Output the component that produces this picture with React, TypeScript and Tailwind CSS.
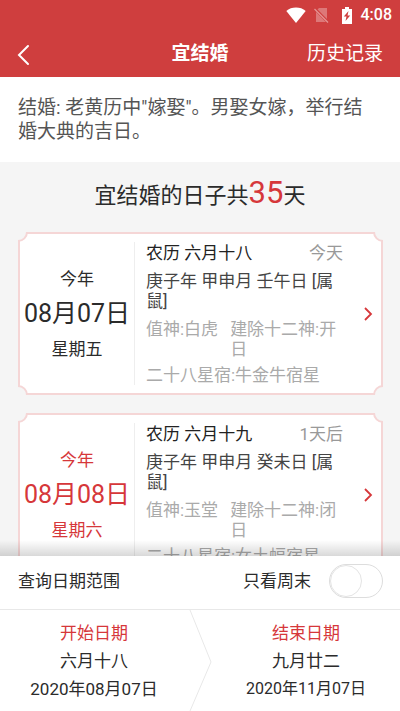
import { useState } from "react";

type Day = {
  date: string;
  week: string;
  lunar: string;
  ago: string;
  ganzhi: string;
  god: string;
  build: string;
  star: string;
  weekend: boolean;
};

const days: Day[] = [
  {
    date: "08月07日",
    week: "星期五",
    lunar: "农历 六月十八",
    ago: "今天",
    ganzhi: "庚子年 甲申月 壬午日 [属鼠]",
    god: "值神:白虎",
    build: "建除十二神:开日",
    star: "二十八星宿:牛金牛宿星",
    weekend: false,
  },
  {
    date: "08月08日",
    week: "星期六",
    lunar: "农历 六月十九",
    ago: "1天后",
    ganzhi: "庚子年 甲申月 癸未日 [属鼠]",
    god: "值神:玉堂",
    build: "建除十二神:闭日",
    star: "二十八星宿:女土蝠宿星",
    weekend: true,
  },
];

function StatusBar() {
  return (
    <div className="flex h-[30px] items-center justify-end gap-2 px-2">
      <svg width="20" height="16" viewBox="0 0 20 16" fill="#fff" aria-hidden="true">
        <path d="M10 16 0.3 4C3 1.6 6.200 0.500 10 0.500S17 1.600 19.700 4Z" />
      </svg>
      <svg width="15" height="16" viewBox="0 0 15 16" aria-hidden="true">
        <path d="M5 1h8v14H2V4Z" fill="#fff" fillOpacity="0.3" />
        <path d="M0.500 1.500 14 15" stroke="#cf3e3e" strokeWidth="3" />
        <path d="M0.500 2 14 15.500" stroke="#fff" strokeOpacity="0.45" strokeWidth="1.300" />
      </svg>
      <svg className="ml-1" width="12" height="17" viewBox="0 0 12 17" aria-hidden="true">
        <path d="M4 0h4v2h3v15H1V2h3Z" fill="#fff" />
        <path d="M7.500 4 2.800 9.500h2.700L4.500 14l4.700-5.500H6.500Z" fill="#cf3e3e" />
      </svg>
      <span className="text-base font-medium">4:08</span>
    </div>
  );
}

function DayCard({ day }: { day: Day }) {
  const notch = "absolute size-5 rounded-full border-2 border-[#f5d6d6] bg-[#f5f5f5]";
  return (
    <a
      href="#day"
      className="relative flex items-center overflow-hidden bg-white p-[10px] pl-[2px] text-[17px] leading-5"
    >
      <span className="absolute inset-0 border-2 border-[#f5d6d6]" />
      <span className={`${notch} -top-[10px] -left-[10px]`} />
      <span className={`${notch} -top-[10px] -right-[10px]`} />
      <span className={`${notch} -bottom-[10px] -left-[10px]`} />
      <span className={`${notch} -right-[10px] -bottom-[10px]`} />
      <div
        className={`flex h-[143px] w-[115px] shrink-0 flex-col items-center justify-center gap-[11px] border-r border-[#eee] ${
          day.weekend ? "text-[#d6373a]" : "text-[#2b2b2b]"
        }`}
      >
        <span>今年</span>
        <span className="text-[25px] leading-7 whitespace-nowrap">{day.date}</span>
        <span>{day.week}</span>
      </div>
      <div className="ml-[11px] flex min-w-0 flex-1 flex-col text-[#aaa]">
        <div className="flex justify-between">
          <span className="text-[#222]">{day.lunar}</span>
          <span className="text-[#999]">{day.ago}</span>
        </div>
        <p className="mt-2 text-[#444]">{day.ganzhi}</p>
        <div className="mt-2 flex gap-3">
          <span className="shrink-0">{day.god}</span>
          <span>{day.build}</span>
        </div>
        <p className="mt-[6px]">{day.star}</p>
      </div>
      <svg className="ml-5 shrink-0" width="10" height="14" viewBox="0 0 10 14" fill="none" aria-hidden="true">
        <path d="M2 1l6 6-6 6" stroke="#d6373a" strokeWidth="1.800" />
      </svg>
    </a>
  );
}

export default function App() {
  const [weekendOnly, setWeekendOnly] = useState(false);
  return (
    <div className="flex h-screen flex-col bg-[#f5f5f5] font-[Roboto,'Noto_Sans_CJK_SC',sans-serif] text-[#2b2b2b]">
      <header className="shrink-0 bg-[#cf3e3e] text-white">
        <StatusBar />
        <div className="grid h-[47px] grid-cols-3 items-center px-[17px] pt-[2px] text-[19px]">
          <button type="button" aria-label="返回" className="justify-self-start">
            <svg width="13" height="22" viewBox="0 0 13 22" fill="none">
              <path d="M11 2 2 11l9 9" stroke="#fff" strokeWidth="2" strokeLinecap="round" />
            </svg>
          </button>
          <h1 className="text-center font-bold">宜结婚</h1>
          <button type="button" className="justify-self-end whitespace-nowrap">历史记录</button>
        </div>
      </header>

      <main className="min-h-0 flex-1 overflow-y-auto [scrollbar-width:none]">
        <p className="bg-white pt-[19px] pr-7 pb-[18px] pl-[18px] text-[19px] leading-6 text-[#555]">
          结婚: 老黄历中"嫁娶"。男娶女嫁，举行结婚大典的吉日。
        </p>
        <h2 className="flex h-[70px] items-baseline justify-center pt-2 text-[22px] leading-[46px]">
          宜结婚的日子共<span className="text-[31px] text-[#d6373a]">35</span>天
        </h2>
        <div className="flex flex-col gap-[18px] pr-[17px] pl-[18px]">
          {days.map((day) => (
            <DayCard key={day.date} day={day} />
          ))}
        </div>
      </main>

      <footer className="relative shrink-0 bg-white text-[17px] leading-5">
        <div className="pointer-events-none absolute inset-x-0 bottom-full h-4 bg-linear-to-t from-black/15 to-transparent" />
        <div className="flex h-[54px] items-center border-b border-[#e8e8e8] pr-[17px] pb-1 pl-[18px]">
          <span className="flex-1">查询日期范围</span>
          <label htmlFor="weekend" className="mr-[18px]">只看周末</label>
          <span className="relative h-[34px] w-[54px]">
            <input
              id="weekend"
              type="checkbox"
              role="switch"
              checked={weekendOnly}
              onChange={(e) => setWeekendOnly(e.target.checked)}
              className="peer block h-full w-full appearance-none rounded-full border border-[#ddd] bg-white checked:bg-[#cf3e3e]"
            />
            <span className="pointer-events-none absolute top-px left-px size-8 rounded-full border border-[#e4e4e4] bg-white peer-checked:translate-x-5" />
          </span>
        </div>
        <div className="flex h-[101px] items-stretch">
          <button type="button" className="flex flex-1 flex-col items-center justify-center gap-2">
            <span className="text-[#d6373a]">开始日期</span>
            <span>六月十八</span>
            <span>2020年08月07日</span>
          </button>
          <svg className="w-6 shrink-0" viewBox="0 0 24 101" fill="none" aria-hidden="true">
            <path d="M2 0 23 52 2 101" stroke="#e8e8e8" />
          </svg>
          <button type="button" className="flex flex-1 flex-col items-center justify-center gap-2">
            <span className="text-[#d6373a]">结束日期</span>
            <span>九月廿二</span>
            <span className="text-base leading-5">2020年11月07日</span>
          </button>
        </div>
      </footer>
    </div>
  );
}
